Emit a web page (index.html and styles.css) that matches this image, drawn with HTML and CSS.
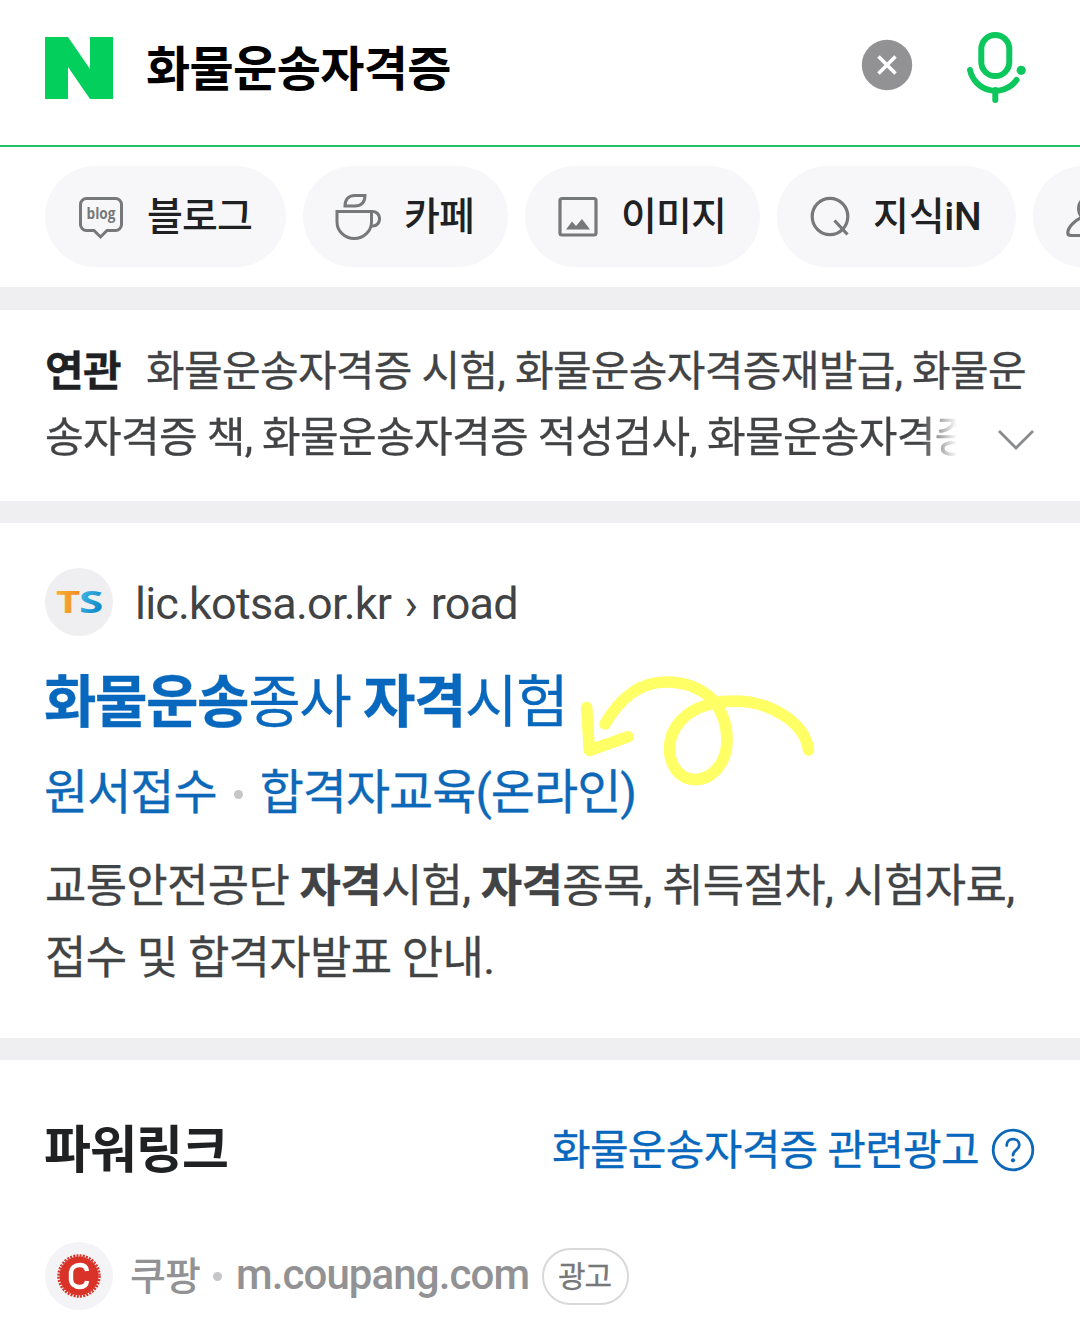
FILE: index.html
```html
<!DOCTYPE html>
<html lang="ko">
<head>
  <meta charset="UTF-8">
  <title>화물운송자격증 : 네이버 검색</title>
  <meta name="viewport" content="width=device-width, initial-scale=1.0">
  <link rel="stylesheet" href="styles.css">
</head>
<body>
  <header class="search-bar">
    <svg class="logo" width="68" height="62" viewBox="0 0 68 62"><path fill="#03cf5d" d="M0 0h23l22 32V0h23v62H45L23 30v32H0z"/></svg>
    <div class="query">화물운송자격증</div>
    <svg class="clear" width="52" height="52" viewBox="0 0 52 52">
      <circle cx="26" cy="26" r="25.2" fill="#929294"/>
      <path d="M17.500 17.500l17 17M34.500 17.500l-17 17" stroke="#fff" stroke-width="3.600"/>
    </svg>
    <svg class="mic" width="64" height="76" viewBox="0 0 64 76" fill="none" stroke="#0cc75c" stroke-width="6" stroke-linecap="round">
      <rect x="17.3" y="6.1" width="28" height="41" rx="14"/>
      <path d="M6 41a26 26 0 0 0 46.5 10M31.3 61v10"/>
      <circle cx="57.2" cy="41.3" r="4.6" fill="#0cc75c" stroke="none"/>
    </svg>
  </header>

  <nav class="tabs">
    <a class="tab tab-blog">
      <svg width="46" height="46" viewBox="0 0 46 46" fill="none" stroke="#77787a" stroke-width="3">
        <path d="M8.500 4.500h29a6 6 0 0 1 6 6v20a6 6 0 0 1-6 6H29L22.500 43 16 36.500H8.500a6 6 0 0 1-6-6v-20a6 6 0 0 1 6-6z"/>
        <text class="blog-text" x="8.500" y="24.500" textLength="29" lengthAdjust="spacingAndGlyphs">blog</text>
      </svg>
      <span>블로그</span>
    </a>
    <a class="tab tab-cafe">
      <svg width="46" height="48" viewBox="0 0 46 48" fill="none" stroke="#77787a" stroke-width="3">
        <path d="M2 18.500h34.500v10.500a17.250 16.500 0 0 1-34.500 0z"/>
        <path d="M36.500 18.500h1.500a6.500 7.200 0 0 1 0 14.500h-1.500"/>
        <path d="M10 13c0-7 4-10.500 10-10.500h10c0 7-4 10.500-10 10.500z"/>
      </svg>
      <span>카페</span>
    </a>
    <a class="tab tab-image">
      <svg width="40" height="42" viewBox="0 0 40 42">
        <rect x="2" y="2.500" width="36" height="36.500" rx="2" fill="none" stroke="#77787a" stroke-width="3.200"/>
        <path fill="#77787a" d="M8 33.500l6-8 4 4.500 6-7 8 10.500z"/>
      </svg>
      <span>이미지</span>
    </a>
    <a class="tab tab-kin">
      <svg width="40" height="42" viewBox="0 0 40 42" fill="none" stroke="#77787a" stroke-width="3.200">
        <ellipse cx="20" cy="20.500" rx="17.800" ry="18.200"/>
        <path d="M24.500 24.500l13 14"/>
      </svg>
      <span class="kin">지식iN</span>
    </a>
    <a class="tab tab-people">
      <svg width="46" height="46" viewBox="0 0 46 46" fill="none" stroke="#77787a" stroke-width="3.200">
        <path d="M17 24c-7-5-6-20 6-20s13 15 6 20"/>
        <path d="M17 23C9 26 2 33 1.800 38.500q0 3 3 3h36q3 0 3-3C43.800 33 37 26 29 23"/>
      </svg>
    </a>
  </nav>

  <section class="related">
    <p class="related-text"><strong>연관</strong>화물운송자격증 시험, 화물운송자격증재발급, 화물운<br><span class="fade">송자격증 책, 화물운송자격증 적성검사, 화물운송자격증</span></p>
    <svg class="chevron" width="38" height="22" viewBox="0 0 38 22"><path d="M2 2l17 17L36 2" fill="none" stroke="#8a8b8d" stroke-width="2.800"/></svg>
  </section>

  <section class="result">
    <div class="source">
      <span class="site-icon"><svg width="50" height="30" viewBox="0 0 50 30">
        <defs>
          <linearGradient id="orange"><stop offset="0" stop-color="#f9b233"/><stop offset="1" stop-color="#f08a24"/></linearGradient>
          <linearGradient id="blue" x2="1" y2="1"><stop offset="0" stop-color="#4cc3ea"/><stop offset="1" stop-color="#007cc0"/></linearGradient>
        </defs>
        <text class="ts" x="2" y="26" textLength="23" lengthAdjust="spacingAndGlyphs" fill="url(#orange)">T</text>
        <text class="ts" x="25" y="26" textLength="23" lengthAdjust="spacingAndGlyphs" fill="url(#blue)">S</text>
      </svg></span>
      <span class="url">lic.kotsa.or.kr <span class="sep">›</span> road</span>
    </div>
    <h2><b>화물운송</b>종사 <b>자격</b>시험</h2>
    <div class="sublinks"><a>원서접수</a><i class="dot"></i><a>합격자교육(온라인)</a></div>
    <p class="desc">교통안전공단 <b>자격</b>시험, <b>자격</b>종목, 취득절차, 시험자료,<br>접수 및 합격자발표 안내.</p>
    <svg class="arrow" width="250" height="130" viewBox="570 665 250 130" fill="none" stroke="#ffff66" stroke-width="11.600" stroke-linecap="round" stroke-linejoin="round">
      <path d="M605 724C620 698 640 682 666 682C686 682 702 689 713 700C722 711 727 725 727 740C727 762 713 779.500 695 779.500C680 779.500 669.500 766 669.500 749C669.500 727 686 711 707 705C718 701 727 701 737 701C770 702 805 722 808.500 750"/>
      <path d="M586.700 707.500L589.300 750.500L628 736.800"/>
    </svg>
  </section>

  <section class="powerlink">
    <div class="powerlink-head">
      <h3>파워링크</h3>
      <a class="about">화물운송자격증 관련광고</a>
      <svg width="44" height="44" viewBox="0 0 44 44" fill="none" stroke="#0e68b8" stroke-width="2.800">
        <circle cx="22" cy="22" r="19.800"/>
        <path d="M15.700 17.500c0-4 2.800-6.300 6.300-6.300s6.300 2.300 6.300 5.800c0 5-6.300 5-6.300 10.200" stroke-linecap="round"/>
        <circle cx="22" cy="32.300" r="2.100" fill="#0e68b8" stroke="none"/>
      </svg>
    </div>
    <div class="ad">
      <span class="site-icon ad-icon"><svg width="46" height="46" viewBox="0 0 46 46">
        <circle cx="23" cy="23" r="19.500" fill="#d93228"/>
        <circle cx="23" cy="23" r="20.500" fill="none" stroke="#d93228" stroke-width="2.500" stroke-dasharray="2 1.220"/>
        <path d="M31 18c-.500-4-3-6-7-6-5.500 0-9 3-9 8v6c0 5 3.500 8 9 8 4 0 6.500-2 7-6" fill="none" stroke="#fff" stroke-width="4.400"/>
      </svg></span>
      <span class="ad-name">쿠팡</span>
      <i class="dot"></i>
      <span class="ad-url">m.coupang.com</span>
      <span class="badge">광고</span>
    </div>
  </section>
</body>
</html>
```
FILE: styles.css
```css
* {
  box-sizing: border-box;
}
body {
  margin: 0;
  width: 1080px;
  height: 1335px;
  overflow: hidden;
  background: #fff;
  color: #424345;
  font-family: Roboto, "Noto Sans CJK KR", sans-serif;
  letter-spacing: -0.9px;
}
h2, h3, p {
  margin: 0;
  font-weight: 400;
}
svg {
  display: block;
  flex: none;
}
.search-bar {
  display: flex;
  align-items: center;
  height: 147px;
  padding: 0 52px 11px 45px;
  border-bottom: 2px solid #1fc16b;
}
.logo {
  margin-top: 2px;
}
.query {
  flex: 1;
  margin-left: 33px;
  padding-bottom: 4px;
  font-size: 48px;
  font-weight: 700;
  letter-spacing: -0.6px;
  color: #000;
}
.clear {
  margin: 0 51px 4px 0;
}
.mic {
  margin-bottom: 1px;
}
.tabs {
  display: flex;
  gap: 17px;
  height: 140px;
  padding: 19px 0 0 45px;
  overflow: hidden;
}
.tab {
  display: flex;
  flex: none;
  align-items: center;
  height: 101px;
  border-radius: 51px;
  background: #f7f7f9;
  color: #202123;
  font-size: 39px;
  font-weight: 500;
}
.tab span {
  padding-bottom: 7px;
}
.tab-blog {
  width: 241px;
  padding-left: 33px;
  gap: 23px;
}
.tab-cafe {
  width: 205px;
  padding-left: 32px;
  gap: 23px;
}
.tab-image {
  width: 235px;
  padding-left: 33px;
  gap: 23px;
}
.tab-kin {
  width: 239px;
  padding-left: 33px;
  gap: 23px;
}
.kin {
  letter-spacing: -0.2px;
}
.tab-people {
  width: 205px;
  padding-left: 33px;
}
.blog-text {
  font: 700 15.5px "Open Sans", sans-serif;
  letter-spacing: 0;
  fill: #77787a;
  stroke: none;
}
.related {
  display: flex;
  height: 214px;
  border-top: 23px solid #efeff1;
  padding: 29px 47px 0 45px;
}
.related-text {
  width: 952px;
  font-size: 42px;
  line-height: 66px;
  letter-spacing: -0.66px;
  white-space: nowrap;
}
.related-text,
.result h2,
.sublinks,
.desc,
.about {
  -webkit-text-stroke: 0.3px currentColor;
}
.related-text strong {
  margin-right: 25px;
  color: #202123;
}
.fade {
  display: block;
  width: 912px;
  overflow: hidden;
  -webkit-mask-image: linear-gradient(to left, transparent, #000 36px);
  mask-image: linear-gradient(to left, transparent, #000 36px);
}
.chevron {
  margin-top: 90px;
}
.result {
  position: relative;
  height: 537px;
  border-top: 22px solid #efeff1;
  padding: 45px 45px 0 44px;
}
.source {
  display: flex;
  align-items: center;
  height: 68px;
  margin-left: 1px;
}
.site-icon {
  display: flex;
  align-items: center;
  justify-content: center;
  width: 68px;
  height: 68px;
  border-radius: 50%;
  background: #efeff1;
}
.ts {
  font: 700 31px "Open Sans", sans-serif;
}
.url {
  margin-left: 22px;
  padding-top: 2px;
  font-size: 45px;
  letter-spacing: -0.8px;
}
.sep {
  margin: 0 3px;
}
.result h2 {
  margin-top: 29px;
  font-size: 57px;
  line-height: 76px;
  letter-spacing: -1.4px;
  color: #0868bd;
}
.sublinks {
  display: flex;
  align-items: center;
  margin-top: 20px;
  font-size: 48px;
  line-height: 64px;
  letter-spacing: -1px;
  color: #0e68b8;
}
.dot {
  width: 9px;
  height: 9px;
  margin: 2px 17px 0;
  border-radius: 50%;
  background: #c6c6c8;
}
.desc {
  margin: 26px 0 0 1px;
  font-size: 45px;
  line-height: 72px;
  letter-spacing: -0.72px;
}
.arrow {
  position: absolute;
  left: 570px;
  top: 142px;
}
.powerlink {
  border-top: 22px solid #efeff1;
  padding: 50px 45px 0 44px;
}
.powerlink-head {
  display: flex;
  align-items: center;
  height: 80px;
}
.powerlink h3 {
  flex: 1;
  padding-bottom: 9px;
  font-size: 51px;
  font-weight: 700;
  color: #202123;
}
.about {
  margin-right: 12px;
  padding-bottom: 7px;
  font-size: 42px;
  letter-spacing: -0.7px;
  color: #0868bd;
}
.ad {
  display: flex;
  align-items: center;
  height: 68px;
  margin: 52px 0 0 1px;
  color: #929294;
}
.ad-icon {
  background: #f4f4f7;
}
.ad-name {
  margin-left: 17px;
  padding-bottom: 7px;
  font-size: 39px;
  font-weight: 500;
}
.ad .dot {
  margin: 0 14px 0 13px;
}
.ad-url {
  padding-bottom: 3px;
  font-size: 42px;
  font-weight: 500;
}
.badge {
  display: flex;
  align-items: center;
  justify-content: center;
  width: 87px;
  height: 57px;
  margin-left: 13px;
  padding: 0 2px 4px 0;
  border: 2px solid #d9d9db;
  border-radius: 29px;
  font-size: 30px;
  color: #77787a;
  -webkit-text-stroke: 0.3px currentColor;
}
```
